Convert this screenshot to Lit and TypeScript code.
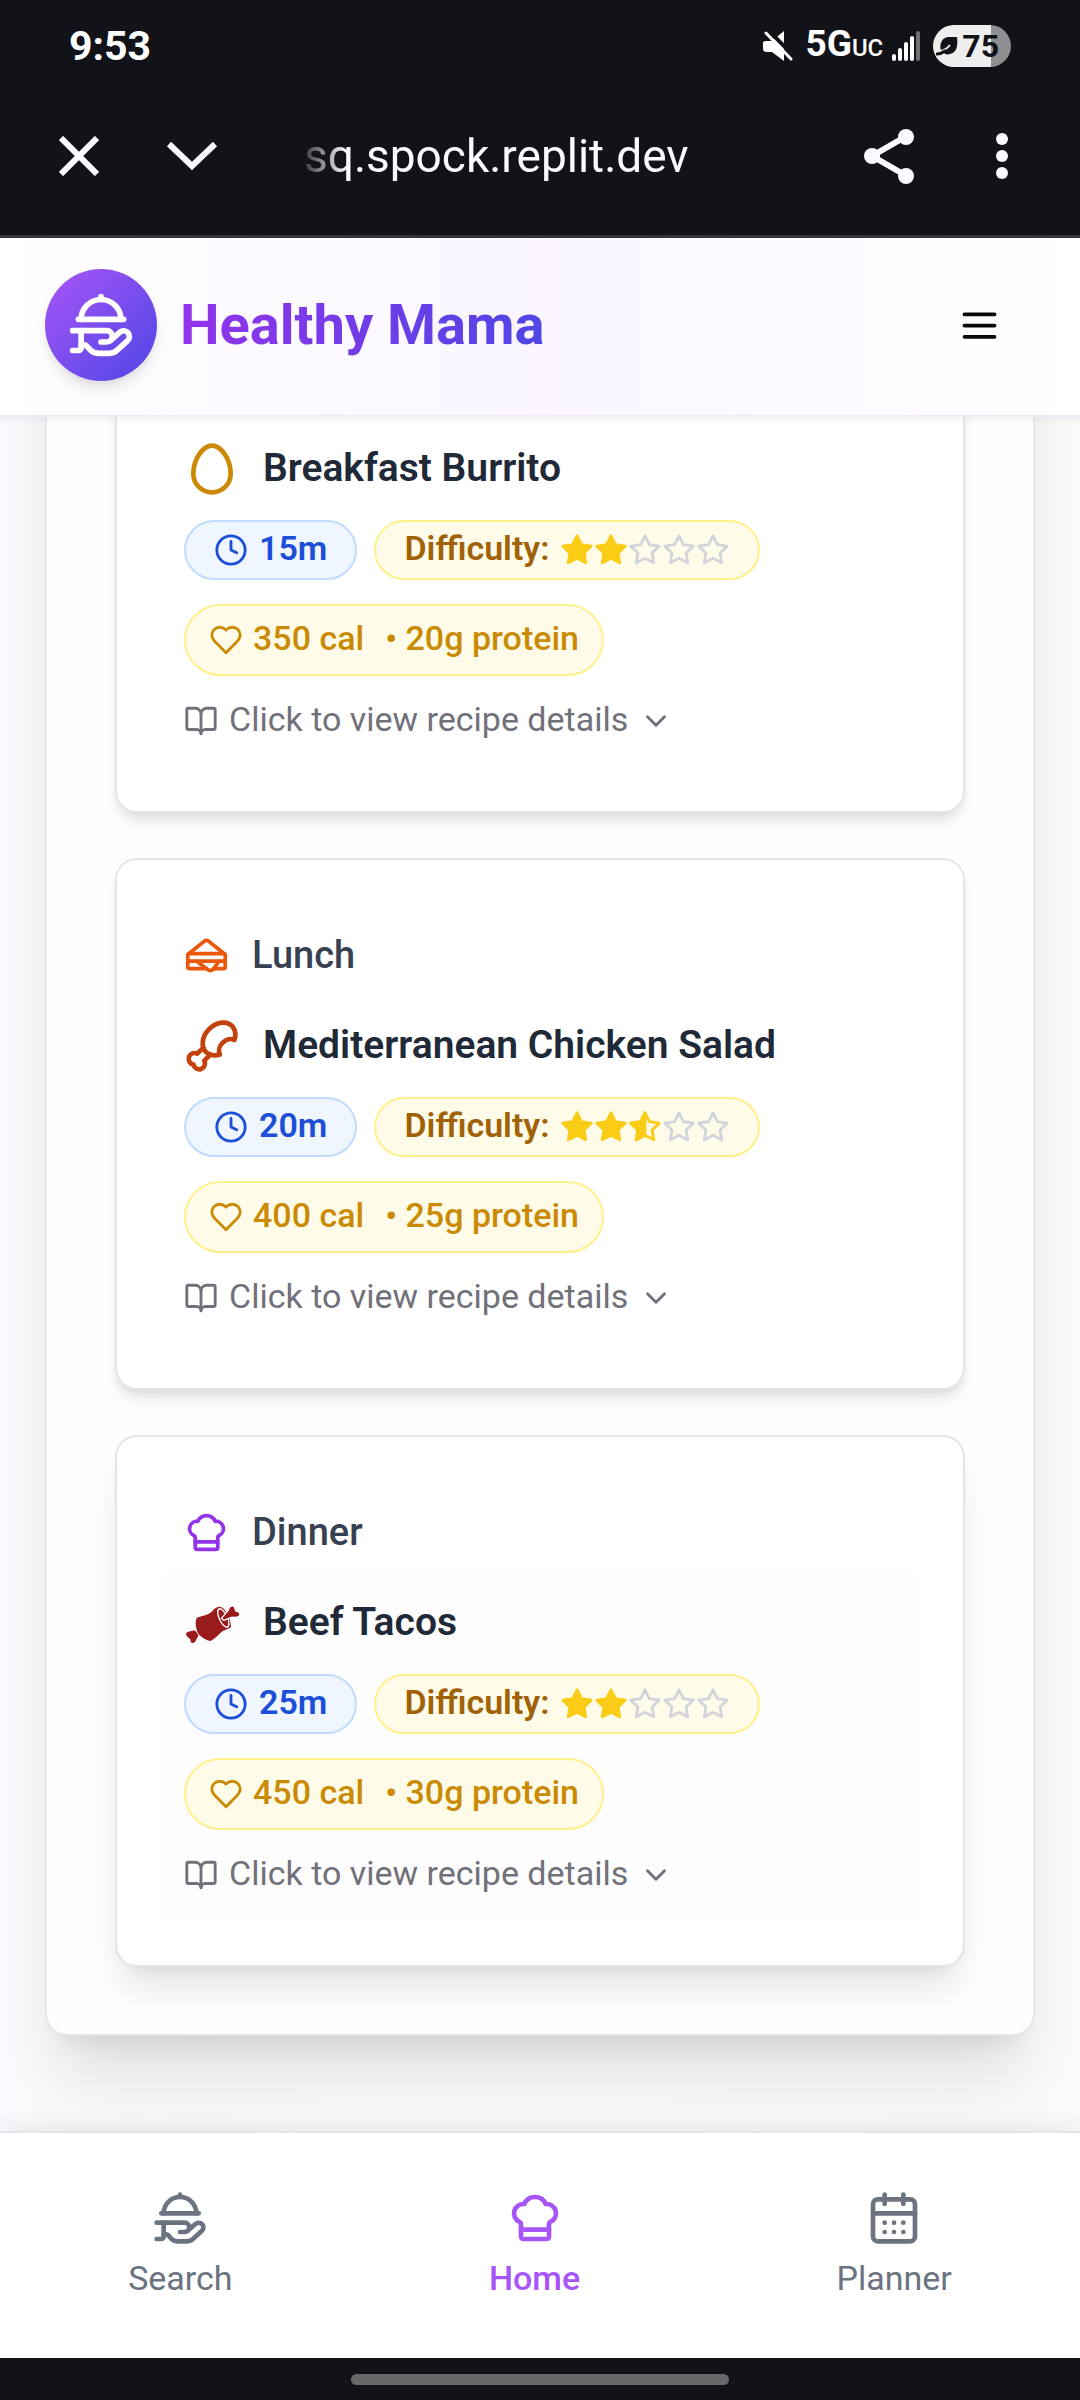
import { LitElement, html, svg, css, nothing } from "lit";
import { customElement, property, state } from "lit/decorators.js";

type IconName = keyof typeof ICONS;

const ICONS = {
  platter: svg`<path d="M12 3V2"/><path d="m15.4 17.4 3.2-2.8a2 2 0 1 1 2.8 2.9l-3.6 3.3c-.7.8-1.7 1.2-2.8 1.2h-4c-1.1 0-2.1-.4-2.8-1.2l-1.302-1.464A1 1 0 0 0 6.151 19H5"/><path d="M2 14h12a2 2 0 0 1 0 4h-2"/><path d="M4 10h16"/><path d="M5 10a7 7 0 0 1 14 0"/><path d="M5 14v6a1 1 0 0 1-1 1H2"/>`,
  menu: svg`<path d="M4 6h16"/><path d="M4 12h16"/><path d="M4 18h16"/>`,
  sandwich: svg`<path d="m2.37 11.223 8.372-6.777a2 2 0 0 1 2.516 0l8.371 6.777"/><path d="M21 15a1 1 0 0 1 1 1v2a1 1 0 0 1-1 1h-5.25"/><path d="M3 15a1 1 0 0 0-1 1v2a1 1 0 0 0 1 1h9"/><path d="m6.67 15 6.13 4.6a2 2 0 0 0 2.8-.4l3.15-4.2"/><rect width="20" height="4" x="2" y="11" rx="1"/>`,
  chef: svg`<path d="M17 21a1 1 0 0 0 1-1v-5.35c0-.457.316-.844.727-1.041a4 4 0 0 0-2.134-7.589 5 5 0 0 0-9.186 0 4 4 0 0 0-2.134 7.588c.411.198.727.585.727 1.041V20a1 1 0 0 0 1 1Z"/><path d="M6 17h12"/>`,
  egg: svg`<path d="M12 2C8 2 4 8 4 14a8 8 0 0 0 16 0c0-6-4-12-8-12"/>`,
  drumstick: svg`<path d="M15.4 15.63a7.875 6 135 1 1 6.23-6.23 4.5 3.43 135 0 0-6.23 6.23"/><path d="m8.29 12.71-2.6 2.6a2.5 2.5 0 1 0-1.65 4.65A2.5 2.5 0 1 0 8.7 18.3l2.59-2.59"/>`,
  clock: svg`<circle cx="12" cy="12" r="10"/><path d="M12 6v6l4 2"/>`,
  heart: svg`<path d="M19 14c1.49-1.46 3-3.21 3-5.5A5.5 5.5 0 0 0 16.5 3c-1.76 0-3 .5-4.5 2-1.5-1.5-2.74-2-4.5-2A5.5 5.5 0 0 0 2 8.5c0 2.3 1.5 4.05 3 5.5l7 7Z"/>`,
  book: svg`<path d="M12 7v14"/><path d="M3 18a1 1 0 0 1-1-1V4a1 1 0 0 1 1-1h5a4 4 0 0 1 4 4 4 4 0 0 1 4-4h5a1 1 0 0 1 1 1v13a1 1 0 0 1-1 1h-6a3 3 0 0 0-3 3 3 3 0 0 0-3-3z"/>`,
  chevron: svg`<path d="m6 9 6 6 6-6"/>`,
  calendar: svg`<path d="M8 2v4"/><path d="M16 2v4"/><rect width="18" height="18" x="3" y="4" rx="2"/><path d="M3 10h18"/><path d="M8 14h.01"/><path d="M12 14h.01"/><path d="M16 14h.01"/><path d="M8 18h.01"/><path d="M12 18h.01"/><path d="M16 18h.01"/>`,
};

const icon = (name: IconName, cls: string) => html`
  <svg class="icon ${cls}" viewBox="0 0 24 24" aria-hidden="true">${ICONS[name]}</svg>
`;

const beefIcon = html`
  <svg class="lg beef" viewBox="12 -2 168 168" aria-hidden="true">
    <path d="M50 67C62 60 84 60 98 45C104 37 112 33 120 33C136 36 152 66 153 94C148 100 138 100 128 107C116 115 106 131 90 136C76 134 66 125 58 118C50 108 43 84 50 67Z"/>
    <ellipse cx="130" cy="67" rx="12" ry="30" transform="rotate(-25 130 67)" fill="none" stroke="#fff" stroke-width="4"/>
    <path d="M124 68L145 44C145 34 156 27 163 33C166 39 165 43 168 46C178 47 183 54 177 62C169 67 161 64 154 65L132 74Z" stroke="#fff" stroke-width="4"/>
    <path d="M42 104C46 104 57 118 55 122C50 126 49 134 44 140C36 145 30 140 32 132C30 128 20 125 18 115C20 106 33 109 42 104Z"/>
  </svg>
`;

interface Meal {
  heading?: { text: string; icon: IconName; tone: string };
  title: string;
  food: "egg" | "drumstick" | "beef";
  minutes: number;
  difficulty: number;
  calories: number;
  protein: number;
}

const MEALS: Meal[] = [
  { title: "Breakfast Burrito", food: "egg", minutes: 15, difficulty: 2, calories: 350, protein: 20 },
  {
    heading: { text: "Lunch", icon: "sandwich", tone: "orange" },
    title: "Mediterranean Chicken Salad", food: "drumstick", minutes: 20, difficulty: 2.5, calories: 400, protein: 25,
  },
  {
    heading: { text: "Dinner", icon: "chef", tone: "purple" },
    title: "Beef Tacos", food: "beef", minutes: 25, difficulty: 2, calories: 450, protein: 30,
  },
];

const shared = css`
  * { box-sizing: border-box; }
  button {
    margin: 0;
    padding: 0;
    border: 0;
    background: none;
    color: inherit;
    font: inherit;
    text-align: left;
    cursor: pointer;
  }
  svg { display: block; flex: none; }
  .icon {
    fill: none;
    stroke: currentColor;
    stroke-width: 2;
    stroke-linecap: round;
    stroke-linejoin: round;
  }
  .sm { width: 34px; height: 34px; }
  .md { width: 45px; height: 45px; }
  .lg { width: 56px; height: 56px; }
  .xl { width: 68px; height: 68px; }
`;

@customElement("star-rating")
export class StarRating extends LitElement {
  @property({ type: Number }) value = 0;

  static styles = [shared, css`
    :host { display: flex; }
    .star { stroke-width: 2; stroke-linejoin: round; fill: none; }
    .on { stroke: #facc15; }
    .off { stroke: #d1d5db; }
    .fill { fill: #facc15; }
  `];

  render() {
    const points = "12 2 15.09 8.26 22 9.27 17 14.14 18.18 21.02 12 17.77 5.82 21.02 7 14.14 2 9.27 8.91 8.26";
    return [1, 2, 3, 4, 5].map((n) => {
      const full = this.value >= n;
      const half = !full && this.value > n - 1;
      return html`
        <svg class="sm star ${full || half ? "on" : "off"} ${full ? "fill" : ""}" viewBox="0 0 24 24" aria-hidden="true">
          <polygon points=${points}/>
          ${half ? svg`<path class="fill" d="M12 2v15.77l-6.18 3.25L7 14.14 2 9.27l6.91-1.01z"/>` : nothing}
        </svg>
      `;
    });
  }
}

@customElement("meal-card")
export class MealCard extends LitElement {
  @property({ attribute: false }) meal!: Meal;
  @property({ type: Boolean, reflect: true }) active = false;

  static styles = [shared, css`
    :host { display: block; }
    .card {
      padding: 67px 67px 46px;
      border: 2px solid #e5e5e5;
      border-radius: 22px;
      background: #fff;
      box-shadow: 0 11px 17px -3px rgba(0, 0, 0, 0.1), 0 6px 11px -6px rgba(0, 0, 0, 0.1);
    }
    :host([active]) .card {
      box-shadow: 0 28px 42px -8px rgba(0, 0, 0, 0.1), 0 11px 17px -11px rgba(0, 0, 0, 0.1);
    }
    .row { display: flex; align-items: center; }
    h2, h3 {
      margin: 0;
      line-height: 57px;
    }
    h2 { color: #374151; font-size: 38px; font-weight: 500; }
    h3 { color: #1f2937; font-size: 39px; font-weight: 600; }
    .head { gap: 23px; margin-bottom: 11px; }
    .recipe {
      display: flex;
      flex-direction: column;
      align-items: flex-start;
      margin: 0 -22px;
      padding: 22px;
      border-radius: 11px;
    }
    :host([active]) .recipe { background: #fdfdfd; }
    .title { gap: 23px; margin-bottom: 23px; }
    .pills { display: flex; flex-wrap: wrap; gap: 17px; margin-bottom: 24px; }
    .pill {
      display: flex;
      align-items: center;
      gap: 10px;
      height: 60px;
      padding: 0 28px;
      border: 2px solid #fef08a;
      border-radius: 36px;
      background: #fefce8;
      color: #a16207;
      font-weight: 600;
    }
    .time { gap: 11px; border-color: #bfdbfe; background: #eff6ff; color: #1d4ed8; }
    .food { height: 72px; padding: 0 23px; margin-bottom: 22px; color: #ca8a04; font-weight: 500; }
    .label { padding-bottom: 3px; }
    .protein { margin-left: 11px; }
    .details { display: flex; align-items: center; gap: 11px; height: 45px; color: #71717a; }
    .egg { color: #ca8a04; }
    .orange { color: #ea580c; }
    .purple { color: #9333ea; }
    .drumstick { color: #c2410c; }
    .beef { fill: #991b1b; }
  `];

  render() {
    const m = this.meal;
    return html`
      <article class="card">
        ${m.heading
          ? html`
              <div class="row head">
                ${icon(m.heading.icon, `md ${m.heading.tone}`)}
                <h2>${m.heading.text}</h2>
              </div>
            `
          : nothing}
        <div class="recipe">
          <div class="row title">
            ${m.food === "beef" ? beefIcon : icon(m.food, `lg ${m.food}`)}
            <h3>${m.title}</h3>
          </div>
          <div class="pills">
            <div class="pill time">${icon("clock", "sm")}<span class="label">${m.minutes}m</span></div>
            <div class="pill">
              <span class="label">Difficulty:</span>
              <star-rating .value=${m.difficulty} role="img" aria-label="${m.difficulty} of 5"></star-rating>
            </div>
          </div>
          <div class="pill food">
            ${icon("heart", "sm")}
            <span class="label">${m.calories} cal</span>
            <span class="label protein">• ${m.protein}g protein</span>
          </div>
          <button class="details" type="button">
            ${icon("book", "sm")}
            <span class="label">Click to view recipe details</span>
            ${icon("chevron", "sm")}
          </button>
        </div>
      </article>
    `;
  }
}

@customElement("browser-chrome")
export class BrowserChrome extends LitElement {
  static styles = [shared, css`
    :host {
      display: block;
      flex: none;
      background: #111318;
      color: #fcfaff;
      border-bottom: 3px solid #36343b;
    }
    .status {
      display: flex;
      align-items: center;
      height: 80px;
      padding: 12px 69px 0;
      color: #fff;
      font-weight: 700;
    }
    .clock { flex: 1; font-size: 41px; line-height: 48px; }
    .mute { margin-right: 12px; }
    .network { display: flex; align-items: baseline; margin-right: 9px; font-size: 37px; line-height: 44px; }
    .band { font-size: 24px; font-weight: 500; }
    .signal { margin-right: 13px; }
    .battery {
      display: flex;
      align-items: center;
      gap: 3px;
      height: 42px;
      padding: 0 12px 0 3px;
      border-radius: 21px;
      background: linear-gradient(to right, #eee 75%, #8f8f91 75%);
      color: #111318;
      font-size: 32px;
      line-height: 42px;
    }
    .toolbar { display: flex; align-items: center; height: 155px; padding: 0 22px 3px; }
    .tool { display: flex; justify-content: center; align-items: center; width: 113px; height: 112px; }
    .url {
      flex: 1;
      overflow: hidden;
      margin-left: 56px;
      font-size: 46px;
      line-height: 64px;
      white-space: nowrap;
      mask-image: linear-gradient(to right, transparent -8px, #000 42px);
    }
    .line { fill: none; stroke: currentColor; stroke-width: 6; }
    .solid { fill: currentColor; }
  `];

  render() {
    return html`
      <div class="status">
        <span class="clock">9:53</span>
        <svg class="mute" width="30" height="30" viewBox="0 0 30 30" role="img" aria-label="Muted">
          <path class="solid" d="M0 12Q0 10 3 10H9L21 0V30L9 21H4Q0 21 0 18Z"/>
          <path d="M4 -2L32 26" stroke="#111318" stroke-width="4"/>
          <path d="M3 2L28 28" stroke="#fff" stroke-width="3" stroke-linecap="round"/>
        </svg>
        <span class="network">5G<span class="band">UC</span></span>
        <svg class="signal" width="28" height="30" viewBox="0 0 28 30" role="img" aria-label="Signal">
          <g class="solid">
            <rect x="0" y="23" width="4" height="7" rx="2"/>
            <rect x="6" y="17" width="4" height="13" rx="2"/>
            <rect x="12" y="11" width="4" height="19" rx="2"/>
            <rect x="18" y="5" width="4" height="25" rx="2"/>
            <rect x="24" y="0" width="4" height="30" rx="2" opacity="0.4"/>
          </g>
        </svg>
        <span class="battery">
          <svg width="23" height="20" viewBox="0 0 23 20" aria-hidden="true">
            <path class="solid" d="M5 15C3 8 6 1 13 1H21C22 9 21 17 14 18C11 19 9 18 8 17Z"/>
            <path d="M4 15Q10 14 14 9" fill="none" stroke="#eee" stroke-width="2"/>
            <path d="M1 18Q5 18 9 15" fill="none" stroke="#111318" stroke-width="3" stroke-linecap="round"/>
          </svg>
          75
        </span>
      </div>
      <div class="toolbar">
        <button class="tool" type="button" aria-label="Close">
          <svg class="line" width="40" height="40" viewBox="0 0 40 40"><path d="M2 2L38 38M38 2L2 38"/></svg>
        </button>
        <button class="tool" type="button" aria-label="Minimize">
          <svg class="line" width="52" height="30" viewBox="0 0 52 30"><path d="M3 3L26 25L49 3"/></svg>
        </button>
        <span class="url">sq.spock.replit.dev</span>
        <button class="tool" type="button" aria-label="Share">
          <svg width="52" height="56" viewBox="0 0 52 56">
            <path class="line" d="M42 9L9 28L42 47"/>
            <g class="solid"><circle cx="43" cy="9" r="8"/><circle cx="9" cy="28" r="8"/><circle cx="43" cy="48" r="8"/></g>
          </svg>
        </button>
        <button class="tool" type="button" aria-label="More">
          <svg class="solid" width="12" height="46" viewBox="0 0 12 46">
            <circle cx="6" cy="6" r="6"/><circle cx="6" cy="23" r="6"/><circle cx="6" cy="40" r="6"/>
          </svg>
        </button>
      </div>
    `;
  }
}

@customElement("app-root")
export class AppRoot extends LitElement {
  @state() private tab = "Home";

  private tabs: { name: string; icon: IconName }[] = [
    { name: "Search", icon: "platter" },
    { name: "Home", icon: "chef" },
    { name: "Planner", icon: "calendar" },
  ];

  static styles = [shared, css`
    :host {
      display: flex;
      flex-direction: column;
      height: 100vh;
      font-family: Roboto, "Liberation Sans", sans-serif;
      font-size: 34px;
      line-height: 45px;
      color: #1f2937;
      background: #fff;
    }
    .header {
      position: relative;
      z-index: 1;
      display: flex;
      flex: none;
      align-items: center;
      height: 179px;
      padding: 0 45px 3px;
      border-bottom: 2px solid #f3e8ff;
      background: linear-gradient(to right, #fff, #faf5ff, #fff);
      box-shadow: 0 3px 6px rgba(0, 0, 0, 0.05);
    }
    .logo {
      display: flex;
      align-items: center;
      justify-content: center;
      width: 112px;
      height: 112px;
      margin-right: 23px;
      border-radius: 50%;
      background: linear-gradient(to bottom right, #a855f7, #4f46e5);
      color: #fff;
      box-shadow: 0 11px 17px -3px rgba(0, 0, 0, 0.1), 0 6px 11px -6px rgba(0, 0, 0, 0.1);
    }
    h1 {
      margin: 0;
      font-size: 56px;
      line-height: 78px;
      font-weight: 700;
      color: transparent;
      background: linear-gradient(to right, #9333ea, #4f46e5);
      background-clip: text;
    }
    .menu {
      display: flex;
      align-items: center;
      justify-content: center;
      width: 112px;
      height: 112px;
      margin-left: auto;
      color: #09090b;
    }
    .page {
      display: flex;
      flex: 1;
      flex-direction: column-reverse;
      min-height: 0;
      overflow-y: auto;
      scrollbar-width: none;
      padding: 0 45px 95px;
      background: linear-gradient(to right, #f8fafd, #fafbfa 30%, #fbfbfb 60%, #fafaf8);
    }
    .plan {
      display: flex;
      flex: none;
      flex-direction: column;
      gap: 45px;
      padding: 67px 68px;
      border: 2px solid #e5e5e5;
      border-radius: 22px;
      background: #fefefe;
      box-shadow: 0 56px 70px -14px rgba(0, 0, 0, 0.1), 0 22px 28px -17px rgba(0, 0, 0, 0.1);
    }
    .nav {
      position: relative;
      z-index: 1;
      display: flex;
      flex: none;
      justify-content: space-around;
      padding: 57px 0;
      border-top: 2px solid #e5e5e5;
      background: #fff;
      box-shadow: 0 -11px 17px -3px rgba(0, 0, 0, 0.06);
    }
    .tab {
      display: flex;
      flex-direction: column;
      align-items: center;
      gap: 10px;
      color: #6b7280;
    }
    .current { color: #a855f7; font-weight: 500; }
    .gesture {
      display: flex;
      flex: none;
      justify-content: center;
      align-items: center;
      height: 42px;
      background: #111318;
    }
    .handle { width: 35%; height: 11px; border-radius: 6px; background: #68686a; }
  `];

  render() {
    return html`
      <browser-chrome></browser-chrome>
      <header class="header">
        <span class="logo">${icon("platter", "xl")}</span>
        <h1>Healthy Mama</h1>
        <button class="menu" type="button" aria-label="Menu">${icon("menu", "md")}</button>
      </header>
      <main class="page">
        <section class="plan">
          ${MEALS.map((meal, i) => html`<meal-card .meal=${meal} ?active=${i === MEALS.length - 1}></meal-card>`)}
        </section>
      </main>
      <nav class="nav">
        ${this.tabs.map((t) => html`
          <button class="tab ${t.name === this.tab ? "current" : ""}" type="button" @click=${() => (this.tab = t.name)}>
            ${icon(t.icon, "lg")}
            <span>${t.name}</span>
          </button>
        `)}
      </nav>
      <div class="gesture"><div class="handle"></div></div>
    `;
  }
}
